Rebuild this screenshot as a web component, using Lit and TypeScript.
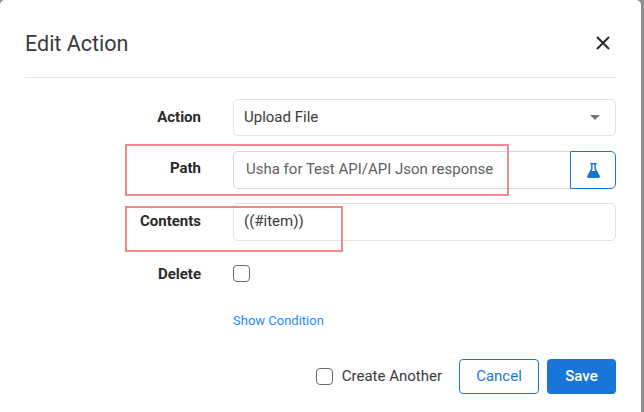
import { LitElement, html, css } from 'lit';
import { customElement } from 'lit/decorators.js';

@customElement('app-root')
export class AppRoot extends LitElement {
  static styles = css`
    :host {
      display: block;
      width: 644px;
      height: 412px;
      overflow: hidden;
      background: #8f8f8f;
      font-family: Roboto, 'Liberation Sans', sans-serif;
      color: #212529;
    }

    .modal {
      position: relative;
      box-sizing: border-box;
      width: 641px;
      height: 412px;
      padding: 0 25px 0 25px;
      background: #fff;
      border-top-left-radius: 5px;
      border-top-right-radius: 5px;
    }

    .header {
      display: flex;
      align-items: center;
      justify-content: space-between;
      height: 78px;
      border-bottom: 1px solid #e3e5e8;
      box-sizing: border-box;
      padding-top: 9px;
    }

    .title {
      font-size: 21.5px;
      font-weight: 400;
      color: #3a3a3a;
    }

    .close {
      display: block;
      width: 14px;
      height: 14px;
      margin-right: 6px;
    }

    .form {
      display: grid;
      grid-template-columns: 176px 1fr;
      column-gap: 32px;
      padding-top: 21px;
    }

    .label {
      font-size: 15px;
      font-weight: 700;
      text-align: right;
      color: #2a2a2a;
      padding-top: 9px;
    }

    .label-path {
      padding-top: 8px;
    }

    .field {
      box-sizing: border-box;
      height: 37px;
      border: 1px solid #e2e3e5;
      border-radius: 5px;
      padding: 0 10px 2px;
      display: flex;
      align-items: center;
      justify-content: space-between;
      font-size: 15px;
      color: #3a3a3a;
    }

    .row-gap {
      margin-bottom: 15px;
    }

    .tall {
      height: 38px;
    }

    .caret {
      width: 0;
      height: 0;
      border-left: 5px solid transparent;
      border-right: 5px solid transparent;
      border-top: 5px solid #777;
      margin: 2px 5px 0 0;
    }

    .path {
      display: flex;
      margin-bottom: 14px;
    }

    .path .field {
      flex: 1;
      height: 38px;
      border-color: #d4d6da;
      border-right: none;
      border-radius: 5px 0 0 5px;
      padding-left: 12px;
      color: #5f5f5f;
    }

    .flask {
      box-sizing: border-box;
      width: 46px;
      height: 38px;
      border: 1.5px solid #1976d8;
      border-radius: 0 5px 5px 0;
      display: flex;
      align-items: center;
      justify-content: center;
    }

    .flask svg {
      width: 13px;
      height: 15px;
    }

    .check {
      box-sizing: border-box;
      display: block;
      width: 17px;
      height: 17px;
      border: 1px solid #6b6b6b;
      border-radius: 4px;
      background: #fff;
    }

    .delete-cell {
      padding-top: 9px;
      height: 50px;
      box-sizing: border-box;
    }

    .link {
      grid-column: 2;
      font-size: 13px;
      color: #1a8cff;
      padding-top: 7px;
    }

    .footer {
      position: absolute;
      right: 25px;
      top: 359px;
      display: flex;
      align-items: center;
    }

    .another {
      display: flex;
      align-items: center;
      gap: 9px;
      font-size: 15px;
      color: #3a3a3a;
      margin-right: 17px;
    }

    .another-text {
      padding-bottom: 2px;
    }

    .btn {
      box-sizing: border-box;
      height: 35px;
      border-radius: 4px;
      padding: 0 0 2px;
      font-family: inherit;
      font-size: 15px;
      display: flex;
      align-items: center;
      justify-content: center;
    }

    .btn-outline {
      width: 80px;
      border: 1px solid #1976d8;
      background: #fff;
      color: #1976d8;
      margin-right: 8px;
    }

    .btn-primary {
      width: 69px;
      border: none;
      background: #1976d8;
      color: #fff;
      font-weight: 500;
    }

    .mark {
      position: absolute;
      box-sizing: border-box;
      border: 2px solid #ef8a8c;
      pointer-events: none;
    }

    .mark-path {
      left: 125px;
      top: 144px;
      width: 384px;
      height: 52px;
    }

    .mark-contents {
      left: 125px;
      top: 206px;
      width: 218px;
      height: 46px;
    }
  `;

  render() {
    return html`
      <div class="modal">
        <div class="header">
          <span class="title">Edit Action</span>
          <svg class="close" viewBox="0 0 14 14">
            <path d="M1 1l12 12M13 1L1 13" stroke="#2a2a2a" stroke-width="2" fill="none" />
          </svg>
        </div>
        <div class="form">
          <div class="label">Action</div>
          <div class="field row-gap">Upload File<span class="caret"></span></div>

          <div class="label label-path">Path</div>
          <div class="path">
            <div class="field">Usha for Test API/API Json response</div>
            <div class="flask">
              <svg viewBox="0 0 14 16">
                <path
                  fill="#1976d8"
                  fill-rule="evenodd"
                  d="M3.5 0h7v1.6H9.6v4.6l4.1 7.4c.6 1.1-.1 2.4-1.4 2.4H1.7C.4 16-.3 14.7.3 13.6l4.1-7.4V1.6h-.9V0zM6 1.6v4.9L5 8.5h4L8 6.5V1.6H6z"
                />
              </svg>
            </div>
          </div>

          <div class="label">Contents</div>
          <div class="field tall row-gap">((#item))</div>

          <div class="label">Delete</div>
          <div class="delete-cell"><span class="check"></span></div>

          <div class="link">Show Condition</div>
        </div>
        <div class="footer">
          <label class="another"><span class="check"></span><span class="another-text">Create Another</span></label>
          <button class="btn btn-outline">Cancel</button>
          <button class="btn btn-primary">Save</button>
        </div>
      </div>
      <div class="mark mark-path"></div>
      <div class="mark mark-contents"></div>
    `;
  }
}
